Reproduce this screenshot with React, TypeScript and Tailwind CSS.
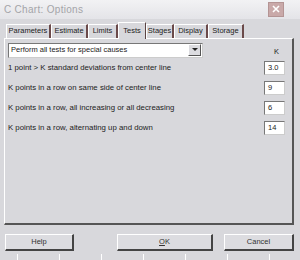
import React from "react";

const font = { fontFamily: '"Liberation Sans", Tahoma, Arial, sans-serif' };

function Tab({ label, w, active }: { label: string; w: string; active?: boolean }) {
  if (active) {
    return (
      <div
        className={`${w} h-[17px] -mb-[1px] relative z-10 bg-[#d8d8dc] border-t border-l border-white border-r border-r-[#5a4444] flex items-center justify-center text-[7.5px] text-[#222]`}
      >
        {label}
      </div>
    );
  }
  return (
    <div
      className={`${w} h-[14px] border-t border-l border-white border-r-2 border-r-[#6b4a4a] flex items-center justify-center text-[7.5px] text-[#222]`}
    >
      {label}
    </div>
  );
}

function Row({ label, value }: { label: string; value: string }) {
  return (
    <div className="flex items-center justify-between h-[20px] pl-[3px] pr-[7px]">
      <span className="text-[7.8px] text-[#222]">{label}</span>
      <div className="w-[21px] h-[14px] bg-white border border-t-[#777] border-l-[#777] border-r-[#ccc] border-b-[#ccc] text-[7.5px] text-[#222] flex items-center pl-[3px]">
        {value}
      </div>
    </div>
  );
}

function Btn({ label, w }: { label: React.ReactNode; w: string }) {
  return (
    <div
      className={`${w} h-[17px] bg-[#dcdce0] border border-t-white border-l-white border-r-2 border-b-2 border-r-[#444] border-b-[#444] flex items-center justify-center text-[7.5px] text-[#333]`}
    >
      {label}
    </div>
  );
}

export default function App() {
  return (
    <div className="w-[300px] h-[260px] bg-[#d8d8dc] overflow-hidden flex flex-col relative" style={font}>
      {/* title bar */}
      <div className="h-[19px] bg-gradient-to-b from-[#f2f2f4] to-[#e4e4e8] flex items-center justify-between pl-[4px] pr-[16px]">
        <span className="text-[10px] text-[#a4a4a8] tracking-[0.3px]">C Chart: Options</span>
        <div className="w-[16px] h-[15px] bg-[#c9a9a9] border border-[#b49494] flex items-center justify-center">
          <svg width="10" height="10" viewBox="0 0 10 10">
            <path d="M2 2 L8 8 M8 2 L2 8" stroke="#ffffff" strokeWidth="1.6" />
          </svg>
        </div>
      </div>
      {/* tabs */}
      <div className="flex items-end pl-[6px] mt-[2px] h-[17px]">
        <Tab label="Parameters" w="w-[45px]" />
        <Tab label="Estimate" w="w-[37px]" />
        <Tab label="Limits" w="w-[30px]" />
        <Tab label="Tests" w="w-[28px]" active />
        <Tab label="Stages" w="w-[28px]" />
        <Tab label="Display" w="w-[34px]" />
        <Tab label="Storage" w="w-[36px]" />
      </div>
      {/* panel */}
      <div className="mx-[4px] w-[290px] h-[190px] border-t border-l border-white border-r-2 border-b-2 border-r-[#555] border-b-[#555] flex flex-col">
        <div className="flex items-start mt-[4px]">
          <div className="ml-[3px] w-[195px] h-[15px] bg-white border border-t-[#777] border-l-[#777] border-r-[#ccc] border-b-[#ccc] flex items-center justify-between">
            <span className="text-[7.5px] text-[#222] pl-[2px]">Perform all tests for special causes</span>
            <div className="w-[13px] h-[12px] mr-[1px] bg-[#dcdce0] border border-t-white border-l-white border-r-[#555] border-b-[#555] flex items-center justify-center">
              <svg width="6" height="4" viewBox="0 0 6 4">
                <path d="M0 0 H6 L3 3 Z" fill="#222" />
              </svg>
            </div>
          </div>
          <span className="ml-[71px] mt-[3px] text-[7.5px] text-[#222]">K</span>
        </div>
        <div className="flex flex-col">
          <Row label="1 point > K standard deviations from center line" value="3.0" />
          <Row label="K points in a row on same side of center line" value="9" />
          <Row label="K points in a row, all increasing or all decreasing" value="6" />
          <Row label="K points in a row, alternating up and down" value="14" />
        </div>
      </div>
      {/* buttons */}
      <div className="flex items-center mt-[9px] pl-[5px]">
        <Btn label="Help" w="w-[69px]" />
        <div className="ml-[43px]">
          <Btn
            label={
              <span>
                <span className="underline">O</span>K
              </span>
            }
            w="w-[96px]"
          />
        </div>
        <div className="ml-[11px]">
          <Btn label="Cancel" w="w-[70px]" />
        </div>
      </div>
      <div className="flex pl-[17px] gap-[41px] mt-[3px]">
        {[0, 1, 2, 3, 4, 5, 6].map((i) => (
          <div key={i} className="w-px h-[6px] bg-white" />
        ))}
      </div>
    </div>
  );
}
